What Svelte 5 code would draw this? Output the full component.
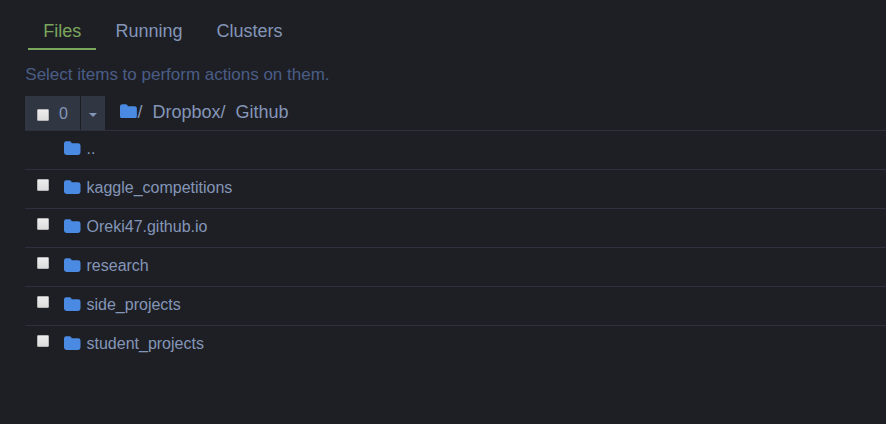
<script>
  const tabs = ['Files', 'Running', 'Clusters'];
  const rows = ['..', 'kaggle_competitions', 'Oreki47.github.io', 'research', 'side_projects', 'student_projects'];
</script>

{#snippet folder()}
  <svg class="folder" viewBox="0 0 17 14" aria-hidden="true">
    <path d="M2.3 0.2H5.4Q7.6 0.2 7.6 2.2H14Q16.5 2.2 16.5 4.6V11.6Q16.5 14 14 14H2.5Q0 14 0 11.6V2.4Q0 0.2 2.3 0.2Z" />
  </svg>
{/snippet}

<main>
  <nav>
    {#each tabs as tab, i}
      <a class:active={i === 0}>{tab}</a>
    {/each}
  </nav>
  <p class="hint">Select items to perform actions on them.</p>
  <section>
    <header>
      <div class="select-all"><span class="check"></span><span class="count">0</span></div>
      <div class="toggle"><span class="caret"></span></div>
      <div class="crumbs">
        {@render folder()}<span>/</span><span class="crumb">Dropbox/</span><span class="crumb">Github</span>
      </div>
    </header>
    {#each rows as row, i}
      <div class="row" class:last={i === rows.length - 1}>
        <span class="check" class:hidden={i === 0}></span>
        {@render folder()}
        <span class="name">{row}</span>
      </div>
    {/each}
  </section>
</main>

<style>
  :global(body) {
    background: #1e1f24;
  }
  main {
    box-sizing: border-box;
    height: 424px;
    overflow: hidden;
    padding: 12px 0 0 25px;
    background: #1e1f24;
    color: #8496b8;
    font-family: "Liberation Sans", Arial, sans-serif;
  }
  nav {
    display: flex;
    gap: 4px;
    padding-left: 3px;
  }
  nav a {
    box-sizing: border-box;
    height: 38px;
    padding: 0 14.8px 0 15.3px;
    border-bottom: 2px solid transparent;
    font-size: 18px;
    line-height: 38px;
  }
  nav a.active {
    color: #7ba65d;
    border-color: #7ba65d;
  }
  .hint {
    margin: 15px 0 11px 0.3px;
    color: #4a5d87;
    font-size: 17px;
    line-height: 20px;
  }
  header {
    display: flex;
    height: 34px;
    border-bottom: 1px solid #2d303d;
  }
  .select-all {
    display: flex;
    width: 43px;
    padding-left: 12px;
    background: #303642;
  }
  .select-all .check {
    margin-top: 13px;
  }
  .count {
    margin-left: 10px;
    font-size: 16px;
    line-height: 36px;
  }
  .toggle {
    display: flex;
    justify-content: center;
    width: 24px;
    margin-left: 1px;
    background: #303642;
  }
  .caret {
    width: 0;
    height: 0;
    margin-top: 17px;
    border: 4px solid transparent;
    border-top-color: #8496b8;
    border-bottom: 0;
  }
  .check {
    box-sizing: border-box;
    flex: none;
    width: 12px;
    height: 12px;
    border: 1px solid #b5b5b5;
    border-radius: 1px;
    background: linear-gradient(#ededed, #dcdcdc);
  }
  .hidden {
    visibility: hidden;
  }
  .folder {
    flex: none;
    width: 17px;
    height: 14px;
    fill: #4b8ae2;
  }
  .crumbs {
    display: flex;
    margin-left: 15px;
    font-size: 18px;
    line-height: 32px;
  }
  .crumbs .folder {
    width: 17.4px;
    height: 14.4px;
    margin-top: 8px;
  }
  .crumb {
    margin-left: 10px;
  }
  .row {
    display: flex;
    height: 38px;
    padding-left: 12px;
    border-bottom: 1px solid #2d303d;
  }
  .row.last {
    border-color: transparent;
  }
  .row .check {
    margin-top: 9px;
  }
  .row .folder {
    margin: 10px 5.5px 0 15px;
  }
  .name {
    font-size: 16px;
    line-height: 36px;
  }
</style>
